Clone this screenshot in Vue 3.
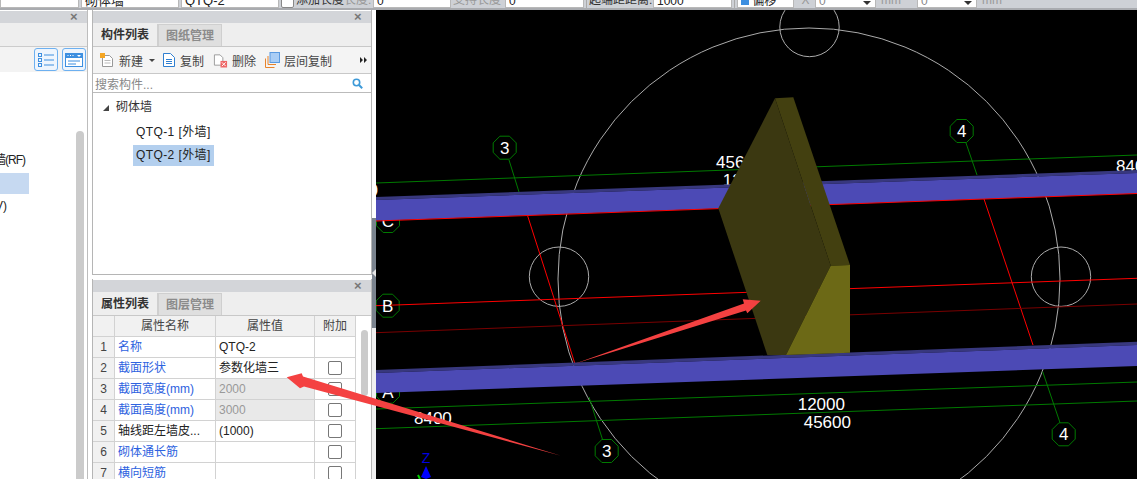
<template>
  <div class="page">
    <div class="topbar">
      <div class="field" style="width: 79px"></div>
      <div class="field f-name" style="width: 98px">砌体墙</div>
      <div class="field f-name" style="width: 98px">QTQ-2</div>
      <span class="check-top"></span>
      <span class="bar-label dark" style="width: 48px">添加长度</span>
      <span class="bar-label" style="width: 29px">长度:</span>
      <div class="field f-num" style="width: 78px">0</div>
      <span class="bar-label" style="width: 52px">支持长度</span>
      <div class="field f-num" style="width: 79px">0</div>
      <span class="bar-sep"></span>
      <span class="bar-label dark" style="width: 64px">起端距距离:</span>
      <div class="field f-num" style="width: 79px">1000</div>
      <span class="bar-sep"></span>
      <div class="field f-num" style="width: 57px"><i class="mini"></i> 偏移</div>
      <span class="bar-label" style="width: 19px; text-align: center">X</span>
      <div class="field f-drop" style="width: 61px">0</div>
      <span class="bar-label mm" style="width: 39px">mm</span>
      <div class="field f-drop" style="width: 60px">0</div>
      <span class="bar-label mm" style="width: 30px">mm</span>
    </div>

    <div class="main">
      <div class="left-panel">
        <div class="title-bar"><span class="close">×</span></div>
        <div class="left-tabs"></div>
        <div class="left-tools">
          <button class="view-btn">
            <svg width="20" height="18" viewBox="0 0 20 18">
              <g fill="none" stroke="#3d8fe0">
                <rect x="2.5" y="2.5" width="3" height="3" />
                <rect x="2.5" y="7.5" width="3" height="3" />
                <rect x="2.5" y="12.5" width="3" height="3" />
                <path d="M8 4h10M8 9h10M8 14h10" />
              </g>
            </svg>
          </button>
          <button class="view-btn">
            <svg width="20" height="18" viewBox="0 0 20 18">
              <rect x="1.5" y="2.5" width="17" height="13" fill="#fff" stroke="#3d8fe0" />
              <rect x="1" y="2" width="18" height="5" fill="#3d8fe0" />
              <path d="M3.500 4.500h1M6 4.500h1M8.500 4.500h1" stroke="#fff" />
              <path d="M13 4h4l-2 2z" fill="#fff" />
              <path d="M4 10h12M4 13h8" stroke="#3d8fe0" />
            </svg>
          </button>
        </div>
        <div class="left-tree">
          <div class="left-rows">
            <div class="lrow tight">砌体墙(RF)</div>
            <div class="lrow on"></div>
            <div class="lrow short">首层(V)</div>
          </div>
          <div class="left-scroll"></div>
        </div>
      </div>

      <div class="mid">
        <div class="list-panel">
          <div class="title-bar"><span class="close">×</span></div>
          <div class="tabs">
            <span class="tab active">构件列表</span>
            <span class="tab">图纸管理</span>
          </div>
          <div class="tools">
            <span class="tool" style="width: 63px">
              <svg width="16" height="16" viewBox="0 0 16 16">
                <path d="M3.500 3.500h7l3 3v8h-10z" fill="#fff" stroke="#999" />
                <path d="M5.500 8.500h6M5.500 11h6" stroke="#bbb" />
                <rect x="1" y="1" width="5" height="5" fill="#f5a623" />
              </svg>
              新建<i class="caret"></i>
            </span>
            <span class="tool" style="width: 51px">
              <svg width="14" height="16" viewBox="0 0 14 16">
                <path d="M1.500 1.500h7l4 4v9h-11z" fill="#fff" stroke="#2f7fd0" />
                <path d="M4 7.500h6M4 9.500h6M4 11.500h6" stroke="#2f7fd0" />
              </svg>
              复制
            </span>
            <span class="tool" style="width: 52px">
              <svg width="15" height="16" viewBox="0 0 16 16">
                <path d="M1.500 2.500h6l3 3v8h-9z" fill="#fff" stroke="#999" />
                <rect x="8" y="9" width="7" height="7" fill="#e66" />
                <path d="M9.500 10.500l4 4M13.500 10.500l-4 4" stroke="#fff" />
              </svg>
              删除
            </span>
            <span class="tool" style="width: 86px">
              <svg width="15" height="16" viewBox="0 0 15 16">
                <path d="M0.500 15.500v-9M0.500 15.500h9M3 12.500v-8.500M3 12.500h8" stroke="#e8842c" fill="none" />
                <rect x="5" y="0.500" width="9.500" height="10" fill="#a9cdf5" stroke="#5a9ae0" />
              </svg>
              层间复制
            </span>
            <span class="more">
              <svg width="7" height="6" viewBox="0 0 7 6"><path d="M0 0l3 3-3 3zM4 0l3 3-3 3z" fill="#222" /></svg>
            </span>
          </div>
          <div class="search">
            <span>搜索构件...</span>
            <svg width="11" height="11" viewBox="0 0 11 11">
              <circle cx="4.500" cy="4.500" r="3.200" fill="none" stroke="#3d9ad8" stroke-width="1.600" />
              <path d="M7 7l3.200 3.200" stroke="#3d9ad8" stroke-width="2" />
            </svg>
          </div>
          <div class="tree">
            <div class="tree-root"><i class="tri"></i>砌体墙</div>
            <div class="tree-item"><span>QTQ-1 [外墙]</span></div>
            <div class="tree-item"><span class="on">QTQ-2 [外墙]</span></div>
          </div>
        </div>

        <div class="prop-panel">
          <div class="title-bar"><span class="close">×</span></div>
          <div class="tabs">
            <span class="tab active">属性列表</span>
            <span class="tab">图层管理</span>
          </div>
          <div class="prop-body">
            <div class="grid">
              <div class="row head">
                <div class="c c-no"></div>
                <div class="c c-name">属性名称</div>
                <div class="c c-val">属性值</div>
                <div class="c c-add">附加</div>
              </div>
              <div v-for="(p, i) in props" :key="i" class="row">
                <div class="c c-no">{{ i + 1 }}</div>
                <div class="c c-name" :class="{ blue: p.blue }">{{ p.name }}</div>
                <div class="c c-val" :class="{ off: p.off }">{{ p.val }}</div>
                <div class="c c-add"><span v-if="p.check" class="box"></span></div>
              </div>
            </div>
            <div class="prop-scroll"><div class="thumb"></div></div>
          </div>
        </div>
      </div>

      <div class="splitter">
        <div class="sp-a"></div>
        <div class="sp-b"><i></i></div>
        <div class="sp-c"></div>
      </div>

      <div class="canvas">
        <svg width="761" height="469" viewBox="376 10 761 469">
          <rect x="376" y="10" width="761" height="469" fill="#000" />
          <g fill="none" stroke="#ababab">
            <circle cx="809" cy="279" r="251" />
            <circle cx="809.500" cy="27" r="29.700" />
            <circle cx="559" cy="276.700" r="29.700" />
            <circle cx="1061" cy="276.700" r="29.700" />
          </g>
          <g fill="none" stroke="#007a00">
            <path d="M376 183L1137 155" />
            <path d="M376 409L1137 382" />
            <path d="M376 428.700L1137 401" />
            <path d="M509 160L519 192" />
            <path d="M966 143L977 175" />
            <path d="M589 397L602.700 440" />
            <path d="M1042.700 371.700L1060 422.700" />
            <polygon v-for="(b, i) in bubbles" :key="i" :points="octagon(b.x, b.y)" />
          </g>
          <g stroke="#f00" fill="none">
            <path d="M527.700 216L575 364" />
            <path d="M984 199L1033 345" />
            <path d="M376 305.700L1137 278.300" />
          </g>
          <path d="M376 332.700L1137 304" stroke="#7a0000" fill="none" />
          <g class="dim">
            <text v-for="(b, i) in bubbles" :key="i" :x="b.x" :y="b.y + 6" text-anchor="middle">{{ b.t }}</text>
            <text x="716" y="168">45600</text>
            <text x="722.700" y="186">12000</text>
            <text x="1116" y="172">8400</text>
            <text x="378" y="196" text-anchor="end">8400</text>
            <text x="414" y="424">8400</text>
            <text x="797.700" y="410">12000</text>
            <text x="803.700" y="428">45600</text>
          </g>
          <polygon points="376,197 1137,170 1137,173 376,200" fill="#38387e" />
          <polygon points="376,200 1137,173 1137,193.500 376,220.700" fill="#4c4ab5" />
          <path d="M376 221L1137 193.500" stroke="#f00" fill="none" />
          <polygon points="376,370 1137,341.700 1137,345 376,373" fill="#38387e" />
          <polygon points="376,373 1137,345 1137,366 376,393" fill="#4c4ab5" />
          <polygon points="775,98.300 793.300,97.300 850,265 830.700,265.700" fill="#434010" />
          <polygon points="775,98.300 830.700,265.700 786,355 767.300,355 718.300,208.300" fill="#3b3811" />
          <polygon points="830.700,265.700 850,265 850,352.700 786,355" fill="#6c6916" />
          <text class="axis" x="426" y="463" text-anchor="middle">Z</text>
          <polygon points="426,466 431,477 426,479 421,477" fill="#0000ff" />
          <path d="M418 475L420 479" stroke="#00d000" stroke-width="2" />
        </svg>
      </div>
    </div>

    <svg class="arrows" width="1137" height="479" viewBox="0 0 1137 479">
      <polygon points="574,364 744,303.500 742.700,299.300 760.700,300.700 747.300,313.300 746,310.500" fill="#f44141" />
      <polygon points="286.700,377.300 301.700,373.300 303,376.500 561,455.700 304,386.500 300,388.300" fill="#f44141" />
    </svg>
  </div>
</template>

<script setup>
const props = [
  { name: "名称", val: "QTQ-2", blue: true, check: false },
  { name: "截面形状", val: "参数化墙三", blue: true, check: true },
  { name: "截面宽度(mm)", val: "2000", blue: true, off: true, check: true },
  { name: "截面高度(mm)", val: "3000", blue: true, off: true, check: true },
  { name: "轴线距左墙皮...", val: "(1000)", check: true },
  { name: "砌体通长筋", val: "", blue: true, check: true },
  { name: "横向短筋", val: "", blue: true, check: true },
];

const bubbles = [
  { x: 504.700, y: 147.700, t: "3" },
  { x: 961.700, y: 131, t: "4" },
  { x: 606.700, y: 451, t: "3" },
  { x: 1063.700, y: 434.300, t: "4" },
  { x: 387.700, y: 305.700, t: "B" },
  { x: 388, y: 221, t: "C" },
  { x: 388, y: 391.700, t: "A" },
];

function octagon(cx, cy) {
  const pts = [];
  for (let i = 0; i < 8; i++) {
    const a = ((i + 0.5) * Math.PI) / 4;
    pts.push(`${(cx + 12.5 * Math.cos(a)).toFixed(1)},${(cy + 12.5 * Math.sin(a)).toFixed(1)}`);
  }
  return pts.join(" ");
}
</script>

<style>
html,
body {
  margin: 0;
  background: #fff;
}
</style>

<style scoped>
.page {
  position: relative;
  width: 1137px;
  height: 479px;
  overflow: hidden;
  font-family: "Liberation Sans", "Noto Sans CJK SC", sans-serif;
  font-size: 12px;
  color: #222;
  display: flex;
  flex-direction: column;
}

.topbar {
  height: 10px;
  flex: none;
  box-sizing: border-box;
  border-bottom: 2px solid #a9abaf;
  background: #ced1d6;
  display: flex;
  align-items: flex-end;
  gap: 2px;
  overflow: hidden;
}

.field {
  flex: none;
  height: 16px;
  box-sizing: border-box;
  line-height: 16px;
  background: #fff;
  border: 1px solid #b8b8b8;
  overflow: hidden;
  white-space: nowrap;
  position: relative;
}

.f-name {
  padding-left: 3px;
  font-size: 13px;
}

.f-num {
  padding-left: 3px;
}

.f-drop {
  padding-left: 3px;
  color: #888;
}

.f-drop::after {
  content: "";
  position: absolute;
  right: 4px;
  top: 8px;
  border: 4px solid transparent;
  border-top-color: #333;
  border-bottom: 0;
}

.mini {
  display: inline-block;
  width: 8px;
  height: 8px;
  background: #3d8fe0;
}

.check-top {
  flex: none;
  width: 13px;
  height: 14px;
  box-sizing: border-box;
  background: #fff;
  border: 1px solid #888;
  border-radius: 2px;
  margin-bottom: 0;
}

.bar-label {
  flex: none;
  height: 16px;
  line-height: 16px;
  color: #999;
  white-space: nowrap;
  overflow: hidden;
  margin-right: -2px;
}

.bar-label.dark {
  color: #333;
}

.bar-label.mm {
  padding-left: 3px;
  box-sizing: border-box;
}

.bar-sep {
  flex: none;
  width: 1px;
  height: 16px;
  background: #aaa;
}

.main {
  flex: 1;
  min-height: 0;
  display: flex;
  background: #fff;
}

.title-bar {
  height: 12px;
  flex: none;
  margin-top: 1px;
  background: #d3d5d9;
  display: flex;
  justify-content: flex-end;
  align-items: center;
}

.close {
  width: 17px;
  font-size: 13px;
  line-height: 12px;
  font-weight: bold;
  color: #777;
}

.left-panel {
  width: 87px;
  flex: none;
  display: flex;
  flex-direction: column;
  border-right: 1px solid #bdbdbd;
  margin-right: 4px;
}

.left-tabs {
  height: 23px;
  flex: none;
  background: #eee;
  border-bottom: 1px solid #ccc;
}

.left-tools {
  height: 25px;
  flex: none;
  background: #f3f3f3;
  display: flex;
  justify-content: flex-end;
  align-items: center;
  gap: 4px;
  padding-right: 1px;
}

.view-btn {
  width: 24px;
  height: 23px;
  padding: 0;
  display: flex;
  align-items: center;
  justify-content: center;
  background: #eef5fd;
  border: 1px solid #6db0f0;
  border-radius: 3px;
}

.left-tree {
  flex: 1;
  min-height: 0;
  display: flex;
}

.left-rows {
  flex: 1;
  padding-top: 78px;
}

.lrow {
  width: 29px;
  height: 21px;
  line-height: 21px;
  margin-bottom: 2px;
  padding-right: 4px;
  box-sizing: border-box;
  display: flex;
  justify-content: flex-end;
  white-space: nowrap;
}

.lrow.tight {
  letter-spacing: -1px;
}

.lrow.short {
  padding-right: 22px;
}

.lrow.on {
  background: #c6d9f1;
}

.left-scroll {
  width: 8px;
  margin: 59px 3px 0 0;
  background: #cbcbcb;
  border-radius: 4px 4px 0 0;
}

.mid {
  width: 280px;
  flex: none;
  display: flex;
  flex-direction: column;
  gap: 4px;
}

.list-panel {
  height: 265px;
  flex: none;
  box-sizing: border-box;
  display: flex;
  flex-direction: column;
  border: 1px solid #b5b5b5;
  border-top: 0;
}

.prop-panel {
  flex: 1;
  min-height: 0;
  display: flex;
  flex-direction: column;
  border-left: 1px solid #b5b5b5;
  border-right: 1px solid #b5b5b5;
}

.tabs {
  height: 23px;
  flex: none;
  display: flex;
  background: #eee;
  border-bottom: 1px solid #c8c8c8;
}

.tab {
  width: 64px;
  box-sizing: border-box;
  margin-top: 1px;
  line-height: 22px;
  text-align: center;
  font-weight: bold;
  color: #8b8b8b;
  background: #dfdfdf;
  border: 1px solid #cfcfcf;
  border-bottom: 0;
}

.tab.active {
  color: #333;
  background: #eee;
  border: 0;
  border-right: 1px solid #cfcfcf;
  width: 65px;
}

.tools {
  height: 27px;
  flex: none;
  box-sizing: border-box;
  display: flex;
  align-items: center;
  padding-left: 6px;
  background: #f4f4f4;
  border-bottom: 1px solid #c8c8c8;
  color: #444;
}

.tool {
  flex: none;
  display: flex;
  align-items: center;
  gap: 4px;
  white-space: nowrap;
}

.caret {
  width: 0;
  height: 0;
  margin-left: 2px;
  border: 3px solid transparent;
  border-top: 3px solid #444;
  border-bottom: 0;
}

.more {
  margin-left: auto;
  margin-right: 4px;
  line-height: 0;
}

.search {
  height: 19px;
  flex: none;
  box-sizing: border-box;
  display: flex;
  align-items: center;
  justify-content: space-between;
  padding: 0 8px 0 2px;
  background: #fff;
  border-bottom: 1px solid #bbb;
  color: #888;
}

.tree {
  flex: 1;
  background: #fff;
  padding-top: 1px;
}

.tree-root {
  height: 27px;
  line-height: 27px;
  padding-left: 10px;
  display: flex;
  align-items: center;
  color: #333;
}

.tri {
  width: 0;
  height: 0;
  margin-right: 7px;
  border-bottom: 6px solid #444;
  border-left: 6px solid transparent;
}

.tree-item {
  height: 23px;
  padding-left: 40px;
  display: flex;
  align-items: center;
}

.tree-item span {
  padding: 0 3px;
  height: 21px;
  line-height: 21px;
  white-space: nowrap;
  letter-spacing: 0.4px;
}

.tree-item .on {
  background: #b3cfee;
}

.prop-body {
  flex: 1;
  min-height: 0;
  display: flex;
  overflow: hidden;
}

.grid {
  width: 263px;
  flex: none;
}

.row {
  display: flex;
  height: 21px;
  box-sizing: border-box;
  border-bottom: 1px solid #d2d2d2;
}

.c {
  box-sizing: border-box;
  line-height: 20px;
  border-right: 1px solid #d2d2d2;
  white-space: nowrap;
  overflow: hidden;
}

.c-no {
  width: 22px;
  text-align: center;
  background: #f1f1f1;
  color: #444;
}

.c-name {
  width: 101px;
  padding-left: 3px;
}

.c-val {
  width: 99px;
  padding-left: 3px;
}

.c-add {
  width: 41px;
  display: flex;
  align-items: center;
  justify-content: center;
}

.head .c {
  background: #f1f1f1;
  color: #444;
  text-align: center;
  padding: 0;
}

.blue {
  color: #2d62e0;
}

.off {
  background: #e9e9e9;
  color: #999;
}

.box {
  width: 14px;
  height: 14px;
  box-sizing: border-box;
  background: #fff;
  border: 1px solid #777;
  border-radius: 2px;
}

.prop-scroll {
  flex: 1;
  background: #fff;
  padding: 14px 3px 0 5px;
}

.thumb {
  height: 66px;
  background: #cbcbcb;
  border-radius: 4px;
}

.splitter {
  width: 4px;
  flex: none;
  display: flex;
  flex-direction: column;
}

.sp-a {
  height: 208px;
  background: #fff;
}

.sp-b {
  height: 110px;
  background: #7a838e;
  display: flex;
  align-items: center;
}

.sp-b i {
  width: 0;
  height: 0;
  border: 4px solid transparent;
  border-left: 0;
  border-right: 4px solid #e6e6e6;
}

.sp-c {
  flex: 1;
  background: #f0f0f0;
}

.canvas {
  flex: 1;
  min-width: 0;
  line-height: 0;
}

.dim text {
  font-family: "Liberation Sans", sans-serif;
  font-size: 17px;
  fill: #fff;
}

.axis {
  font-family: "Liberation Sans", sans-serif;
  font-size: 14px;
  fill: #0000e0;
}

.arrows {
  position: absolute;
  left: 0;
  top: 0;
  pointer-events: none;
}
</style>
